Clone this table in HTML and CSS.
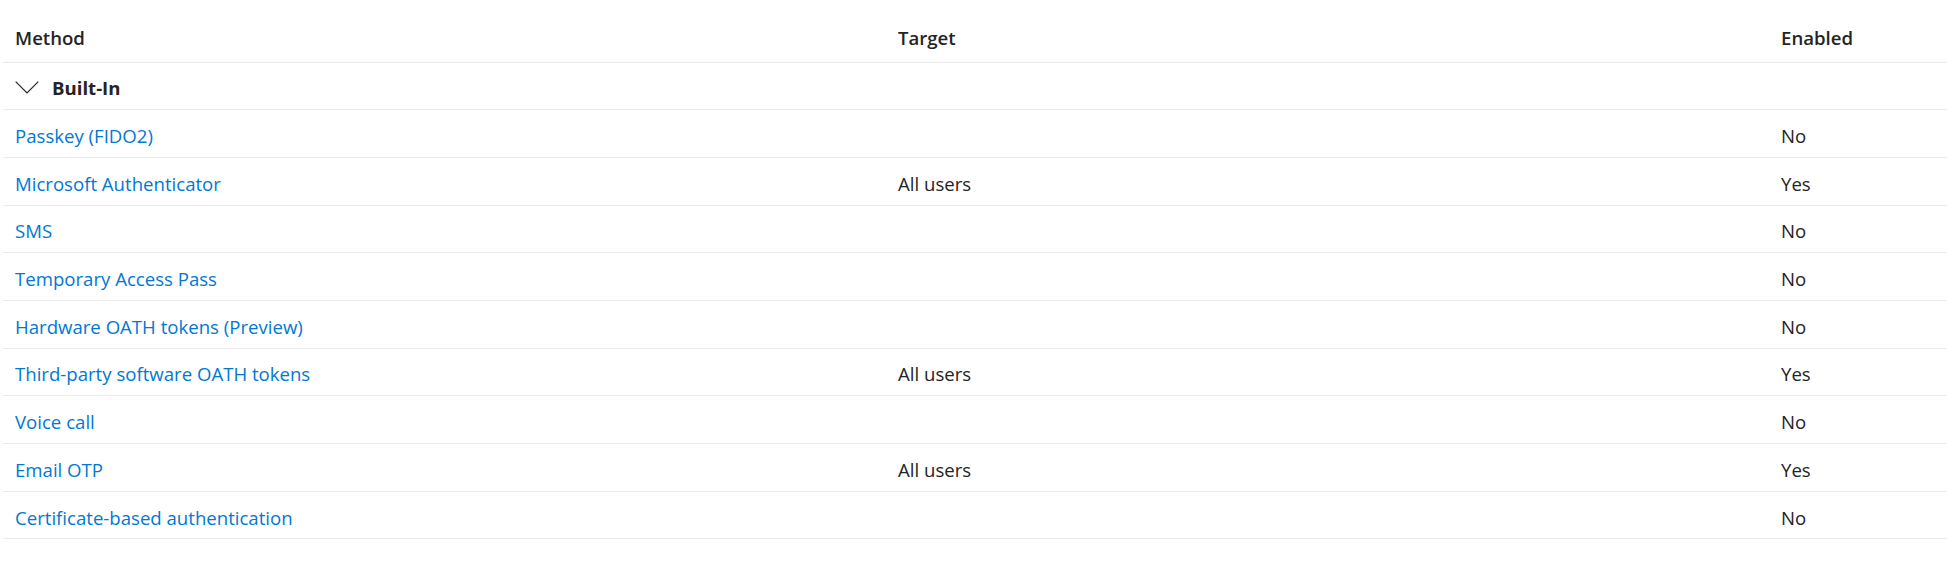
FILE: index.html
```html
<!DOCTYPE html>
<html lang="en">
<head>
<meta charset="utf-8">
<title>Authentication methods</title>
<link rel="stylesheet" href="styles.css">
</head>
<body>
<div class="table">
  <div class="row header">
    <div class="cell">Method</div>
    <div class="cell">Target</div>
    <div class="cell">Enabled</div>
  </div>
  <div class="row group">
    <div class="cell group-cell">
      <svg class="chevron" width="24" height="14" viewBox="0 0 24 14" aria-hidden="true"><path d="M0.7 0.7 L12 12 L23.3 0.7" fill="none" stroke="#242424" stroke-width="1.2"/></svg>
      <span>Built-In</span>
    </div>
    <div class="cell"></div>
    <div class="cell"></div>
  </div>
  <div class="row"><div class="cell"><a href="#">Passkey (FIDO2)</a></div><div class="cell"></div><div class="cell">No</div></div>
  <div class="row"><div class="cell"><a href="#">Microsoft Authenticator</a></div><div class="cell">All users</div><div class="cell">Yes</div></div>
  <div class="row"><div class="cell"><a href="#">SMS</a></div><div class="cell"></div><div class="cell">No</div></div>
  <div class="row"><div class="cell"><a href="#">Temporary Access Pass</a></div><div class="cell"></div><div class="cell">No</div></div>
  <div class="row"><div class="cell"><a href="#">Hardware OATH tokens (Preview)</a></div><div class="cell"></div><div class="cell">No</div></div>
  <div class="row"><div class="cell"><a href="#">Third-party software OATH tokens</a></div><div class="cell">All users</div><div class="cell">Yes</div></div>
  <div class="row"><div class="cell"><a href="#">Voice call</a></div><div class="cell"></div><div class="cell">No</div></div>
  <div class="row"><div class="cell"><a href="#">Email OTP</a></div><div class="cell">All users</div><div class="cell">Yes</div></div>
  <div class="row"><div class="cell"><a href="#">Certificate-based authentication</a></div><div class="cell"></div><div class="cell">No</div></div>
</div>
</body>
</html>
```
FILE: styles.css
```css
html, body {
  margin: 0;
  padding: 0;
  background: #ffffff;
}
body {
  font-family: "Open Sans", "Noto Sans", sans-serif;
  font-size: 18.6px;
  color: #242424;
}
.table {
  margin-left: 3px;
}
.row {
  display: grid;
  grid-template-columns: 883px 883px 1fr;
  height: 47.7px;
  box-sizing: border-box;
  border-bottom: 1px solid #ebebeb;
  align-items: center;
}
.header {
  height: 62.5px;
  padding-top: 10px;
  font-weight: 600;
}
.cell {
  padding-left: 12px;
  padding-top: 5px;
  white-space: nowrap;
  line-height: 24px;
}
.group-cell {
  display: flex;
  align-items: center;
  gap: 13px;
  font-weight: 700;
}
.chevron {
  display: block;
}
a {
  color: #0078d4;
  text-decoration: none;
}
```
